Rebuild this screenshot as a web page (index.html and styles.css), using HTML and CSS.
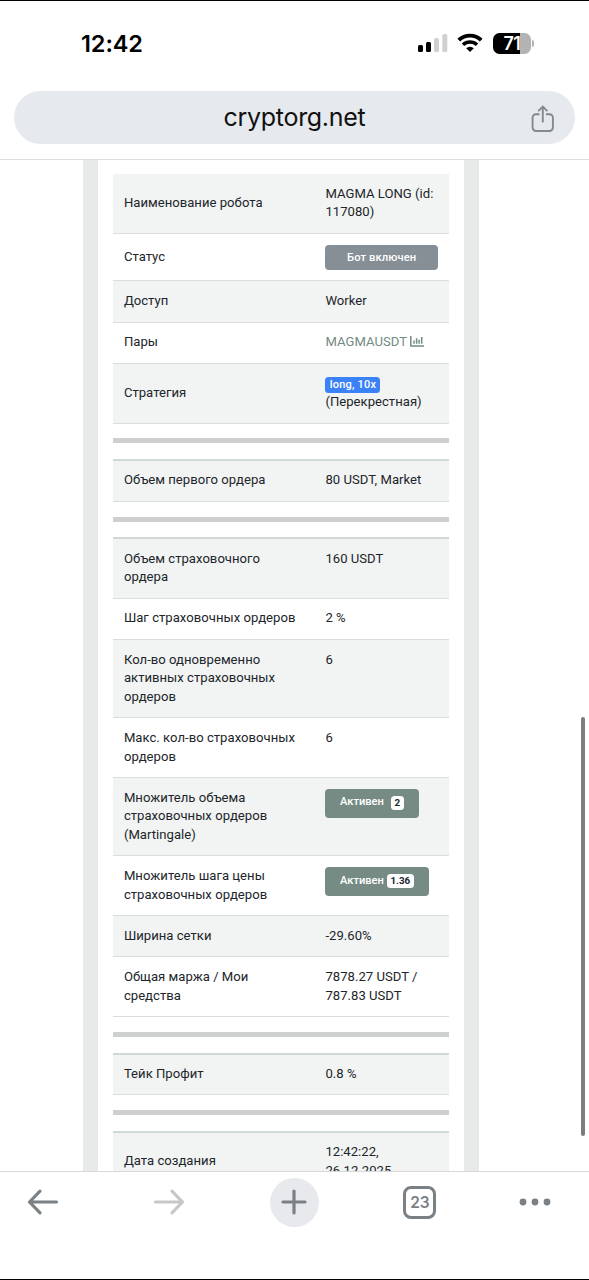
FILE: index.html
```
<!DOCTYPE html>
<html lang="ru">
<head>
    <meta charset="UTF-8">
    <meta name="viewport" content="width=device-width, initial-scale=1.0">
    <title>cryptorg.net</title>
    <link rel="stylesheet" href="styles.css">
</head>
<body>
    <div class="status-bar">
        <span class="time">12:42</span>
        <div class="status-icons">
            <svg class="signal" width="30" height="20" viewBox="0 0 30 20">
                <rect x="0" y="12" width="5" height="7" rx="1.5" fill="#000"/>
                <rect x="8" y="9" width="5" height="10" rx="1.5" fill="#000"/>
                <rect x="16" y="5" width="5" height="14" rx="1.5" fill="#d0d0d0"/>
                <rect x="24.3" y="1" width="5" height="18" rx="1.5" fill="#d0d0d0"/>
            </svg>
            <svg class="wifi" width="26" height="20" viewBox="0 0 26 20">
                <path d="M1.8 7.1a16.2 16.2 0 0 1 22.4 0" fill="none" stroke="#000" stroke-width="3.9"/>
                <path d="M6 11.7a10.2 10.2 0 0 1 14 0" fill="none" stroke="#000" stroke-width="3.5"/>
                <path d="M13 19l-3.8-3.8a5.4 5.4 0 0 1 7.6 0z" fill="#000"/>
            </svg>
            <div class="battery">
                <div class="battery-body">71</div>
                <div class="battery-tip"></div>
            </div>
        </div>
    </div>

    <div class="address-bar">
        <div class="address">
            <span class="address-text">cryptorg.net</span>
            <svg class="share" width="24" height="28" viewBox="0 0 24 28">
                <path d="M8.5 9.2H5a3.4 3.4 0 0 0-3.4 3.4v10A3.4 3.4 0 0 0 5 26h13.5a3.4 3.4 0 0 0 3.4-3.4v-10a3.4 3.4 0 0 0-3.4-3.4H15M11.8 17.5V1.8M7.2 6.2l4.6-4.6 4.6 4.6" fill="none" stroke="#85898d" stroke-width="1.9"/>
            </svg>
        </div>
    </div>

    <div class="page">
        <div class="card">
            <div class="table">
                <div class="row middle">
                    <div>Наименование робота</div>
                    <div>MAGMA LONG (id: 117080)</div>
                </div>
                <div class="row middle">
                    <div>Статус</div>
                    <div><span class="bot-status">Бот включен</span></div>
                </div>
                <div class="row">
                    <div>Доступ</div>
                    <div>Worker</div>
                </div>
                <div class="row">
                    <div>Пары</div>
                    <div class="pair">MAGMAUSDT
                        <svg width="14" height="11" viewBox="0 0 14 11">
                            <path d="M.8 0v9.9H14" fill="none" stroke="#738b82" stroke-width="1.5"/>
                            <path d="M4 4.5v3.2M6.6 2.3v5.4M9.1 3.7v4M11.7 1v6.7" fill="none" stroke="#738b82" stroke-width="1.5"/>
                        </svg>
                    </div>
                </div>
                <div class="row middle">
                    <div>Стратегия</div>
                    <div class="strategy"><span class="leverage">long, 10x</span><span>(Перекрестная)</span></div>
                </div>
            </div>

            <hr>
            <div class="table section">
                <div class="row">
                    <div>Объем первого ордера</div>
                    <div>80 USDT, Market</div>
                </div>
            </div>

            <hr>
            <div class="table section">
                <div class="row">
                    <div>Объем страховочного ордера</div>
                    <div>160 USDT</div>
                </div>
                <div class="row">
                    <div>Шаг страховочных ордеров</div>
                    <div>2 %</div>
                </div>
                <div class="row">
                    <div>Кол-во одновременно активных страховочных ордеров</div>
                    <div>6</div>
                </div>
                <div class="row">
                    <div>Макс. кол-во страховочных ордеров</div>
                    <div>6</div>
                </div>
                <div class="row">
                    <div>Множитель объема страховочных ордеров (Martingale)</div>
                    <div><span class="active wide">Активен <b>2</b></span></div>
                </div>
                <div class="row">
                    <div>Множитель шага цены страховочных ордеров</div>
                    <div><span class="active">Активен <b>1.36</b></span></div>
                </div>
                <div class="row">
                    <div>Ширина сетки</div>
                    <div>-29.60%</div>
                </div>
                <div class="row">
                    <div>Общая маржа / Мои средства</div>
                    <div>7878.27 USDT / 787.83 USDT</div>
                </div>
            </div>

            <hr>
            <div class="table section">
                <div class="row">
                    <div>Тейк Профит</div>
                    <div>0.8 %</div>
                </div>
            </div>

            <hr>
            <div class="table section">
                <div class="row middle">
                    <div>Дата создания</div>
                    <div>12:42:22, 26.12.2025</div>
                </div>
            </div>
        </div>
        <div class="scrollbar"></div>
    </div>

    <div class="toolbar">
        <div class="tool">
            <svg width="32" height="28" viewBox="0 0 32 28">
                <path d="M29.5 14H2.5M13 3.2L2.5 14 13 24.8" fill="none" stroke="#7b8085" stroke-width="3.2" stroke-linecap="round" stroke-linejoin="round"/>
            </svg>
        </div>
        <div class="tool">
            <svg width="32" height="28" viewBox="0 0 32 28">
                <path d="M2.5 14h27M19 3.2L29.5 14 19 24.8" fill="none" stroke="#c6c7c8" stroke-width="3.2" stroke-linecap="round" stroke-linejoin="round"/>
            </svg>
        </div>
        <div class="tool">
            <div class="new-tab">
                <svg width="26" height="26" viewBox="0 0 26 26">
                    <path d="M13 2v22M2 13h22" fill="none" stroke="#7b8085" stroke-width="3.2" stroke-linecap="round"/>
                </svg>
            </div>
        </div>
        <div class="tool"><div class="tabs">23</div></div>
        <div class="tool">
            <svg width="32" height="8" viewBox="0 0 32 8">
                <g fill="#7b8085">
                    <circle cx="4" cy="4" r="3.4"/>
                    <circle cx="16" cy="4" r="3.4"/>
                    <circle cx="28" cy="4" r="3.4"/>
                </g>
            </svg>
        </div>
    </div>
</body>
</html>
```
FILE: styles.css
```
* {
    box-sizing: border-box;
}

body {
    margin: 0;
    height: 1280px;
    display: flex;
    flex-direction: column;
    overflow: hidden;
    background-color: #fff;
    border-top: 1px solid #000;
    border-bottom: 1px solid #000;
    font-family: Roboto, Arial, sans-serif;
    color: #212529;
}

.status-bar {
    height: 90px;
    flex-shrink: 0;
    display: flex;
    justify-content: space-between;
    align-items: flex-start;
    padding: 28px 55px 0 81px;
    color: #000;
}

.time {
    font-family: Inter, sans-serif;
    font-size: 23.5px;
    line-height: 29px;
    font-weight: 600;
    letter-spacing: -0.1px;
}

.status-icons {
    display: flex;
    align-items: center;
    height: 28px;
}

.wifi {
    margin: 0 10px 0 9px;
}

.battery {
    display: flex;
    align-items: center;
    gap: 1px;
}

.battery-body {
    width: 38px;
    height: 21px;
    border-radius: 6.5px;
    background: linear-gradient(to right, #000 27px, #b3b3b3 27px);
    color: #fff;
    font-family: Inter, sans-serif;
    font-size: 18px;
    font-weight: 600;
    line-height: 21px;
    text-align: center;
    letter-spacing: -0.5px;
}

.battery-tip {
    width: 2px;
    height: 7px;
    border-radius: 0 3px 3px 0;
    background-color: #b3b3b3;
}

.address-bar {
    height: 69px;
    flex-shrink: 0;
    padding: 0 14px;
    border-bottom: 1px solid #dcdee0;
}

.address {
    height: 53px;
    border-radius: 27px;
    background-color: #e6e9ed;
    display: grid;
    grid-template-columns: 1fr auto 1fr;
    align-items: center;
    padding: 0 20px;
}

.address-text {
    grid-column: 2;
    margin-top: -2px;
    font-family: Inter, sans-serif;
    font-size: 25px;
    line-height: 32px;
    letter-spacing: -0.3px;
    color: #111;
}

.share {
    justify-self: end;
    margin-top: 2px;
}

.page {
    position: relative;
    flex: 1;
    min-height: 0;
    overflow: hidden;
    padding-left: 82.5px;
}

.card {
    width: 396.5px;
    height: 1020px;
    border: solid #e7eae9;
    border-width: 0 15.5px;
    padding: 13.9px 15px 0;
}

.table {
    font-size: 13.1px;
    line-height: 18.6px;
    letter-spacing: 0.02px;
}

.section {
    border-top: 2px solid #d0d9d8;
}

.row {
    display: grid;
    grid-template-columns: 201.5px 1fr;
    border-bottom: 1px solid #dadddd;
}

.row:nth-child(odd) {
    background-color: #f2f4f4;
}

.row > div {
    padding: 10.82px 11px 10.82px 11.4px;
}

.section .row:first-child > div {
    padding-top: 10.2px;
}

.middle {
    align-items: center;
}

hr {
    height: 5px;
    margin: 14.8px 0 15.8px;
    border: none;
    background-color: #cecfcf;
}

.bot-status {
    display: block;
    height: 25px;
    border-radius: 4px;
    background-color: #868e96;
    color: #fff;
    font-size: 11.2px;
    font-weight: 500;
    line-height: 25px;
    letter-spacing: 0.1px;
    text-align: center;
}

.pair {
    color: #738b82;
}

.pair svg {
    vertical-align: -1px;
}

.strategy {
    display: flex;
    flex-direction: column;
    align-items: flex-start;
}

.leverage {
    height: 16px;
    margin: 2.4px 0 0.2px;
    padding: 0 4.3px;
    border-radius: 3.5px;
    background-color: #3b82f6;
    color: #fff;
    font-size: 11px;
    font-weight: 500;
    line-height: 16px;
    letter-spacing: 0.2px;
}

.active {
    display: inline-flex;
    align-items: center;
    gap: 2.8px;
    height: 29px;
    margin-bottom: -10px;
    padding: 0 14.7px 2px;
    border-radius: 4px;
    background-color: #758b83;
    color: #fff;
    font-size: 11.1px;
    font-weight: 500;
    line-height: 26px;
    letter-spacing: 0;
    vertical-align: top;
}

.active.wide {
    gap: 6.8px;
}

.active b {
    height: 14px;
    padding: 0 3.8px;
    margin-top: 1px;
    border-radius: 3.5px;
    background-color: #fff;
    color: #212529;
    font-size: 9.8px;
    font-weight: 700;
    line-height: 14px;
}

.scrollbar {
    position: absolute;
    right: 4px;
    top: 557px;
    width: 4px;
    height: 419px;
    border-radius: 2px;
    background-color: #7d7d7d;
}

.toolbar {
    height: 108px;
    flex-shrink: 0;
    display: grid;
    grid-template-columns: repeat(5, 1fr);
    padding: 6px 0 0;
    margin: 0 -20px;
    border-top: 1px solid #d6d8da;
    background-color: #fff;
}

.tool {
    height: 48px;
    display: flex;
    justify-content: center;
    align-items: center;
}

.tool:last-child {
    padding-right: 22px;
}

.new-tab {
    width: 49px;
    height: 49px;
    flex-shrink: 0;
    border-radius: 50%;
    background-color: #e8e9ed;
    display: flex;
    justify-content: center;
    align-items: center;
}

.tabs {
    width: 33px;
    height: 33px;
    margin-right: 1px;
    border: 3px solid #7b8085;
    border-radius: 8px;
    color: #7b8085;
    font-family: Inter, sans-serif;
    font-size: 15.5px;
    font-weight: 600;
    line-height: 28px;
    letter-spacing: -0.3px;
    text-align: center;
}
```
